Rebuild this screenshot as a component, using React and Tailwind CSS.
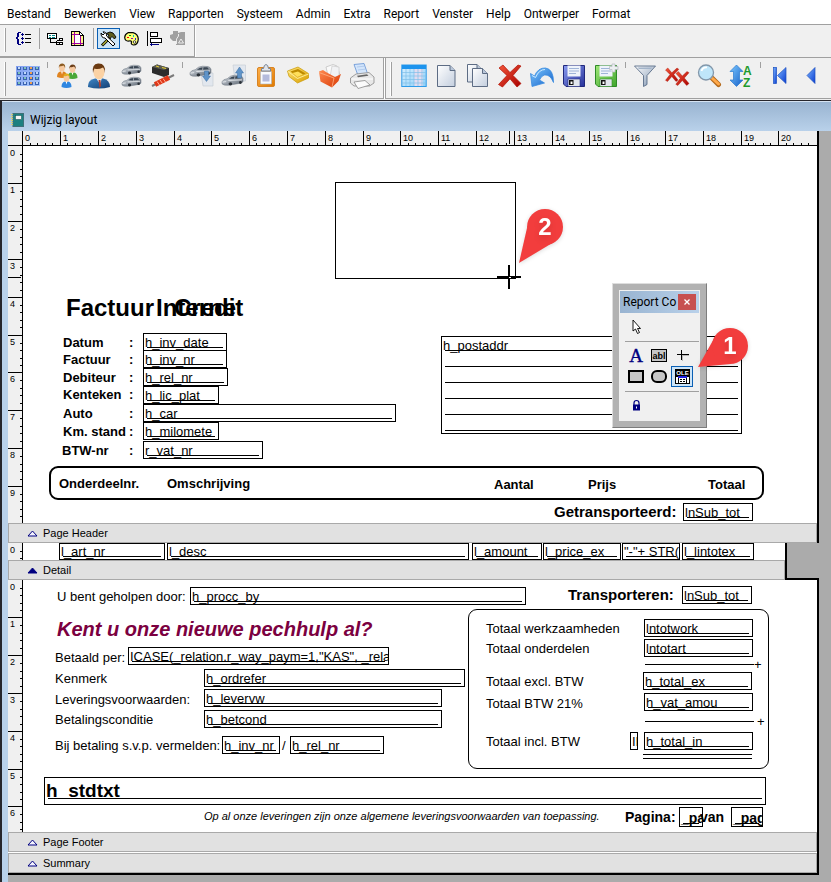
import React from "react";

const CM = 37.8;

/* ---------- small building blocks ---------- */

function Grip({ tall }) {
  return (
    <span
      className={
        "ml-1 mr-1.5 w-[2px] shrink-0 self-start border-l border-l-white bg-[#a0a0a0] " +
        (tall ? "mt-1 h-[34px]" : "h-6")
      }
    />
  );
}

function SmallButton({ label, active, children }) {
  return (
    <button
      type="button"
      aria-label={label}
      className={
        "flex h-[21px] w-[23px] shrink-0 items-center justify-center " +
        (active ? "border border-[#0a5fb4] bg-[#cce4f7]" : "")
      }
    >
      {children}
    </button>
  );
}

function SmallSeparator() {
  return (
    <span className="flex w-2 shrink-0 justify-center">
      <span className="h-[21px] w-px bg-[#a0a0a0]" />
    </span>
  );
}

function BigButton({ label, children }) {
  return (
    <button type="button" aria-label={label} className="flex h-9 w-8 shrink-0 items-center justify-center">
      <svg width="26" height="26" viewBox="0 0 26 26" aria-hidden="true">
        {children}
      </svg>
    </button>
  );
}

function BigSeparator() {
  return (
    <span className="flex w-[7px] shrink-0 justify-center self-start pt-1">
      <span className="h-1.5 w-px bg-[#a0a0a0]" />
    </span>
  );
}

/* ---------- icon parts ---------- */

function Gradients() {
  const list = [
    ["gPaper", "#ffffff", "#c3cede"],
    ["gRed", "#f4573a", "#a80000"],
    ["gBlue", "#7cc8ff", "#1560c8"],
    ["gNav", "#7ab4ff", "#0a3cd0"],
    ["gFun", "#ffffff", "#7d93b0"],
    ["gGold", "#ffe477", "#d99e00"],
    ["gFold", "#ff8a50", "#d83a06"],
    ["gFlop", "#8a9cf0", "#26309a"],
    ["gGreen", "#a0e878", "#3fa52c"],
    ["gCar", "#dde2e8", "#59636f"],
    ["gSuit", "#3f86c6", "#123f74"],
    ["gOrange", "#ffb04a", "#e07a00"],
    ["gTable", "#d9f0ff", "#8fd0f8"],
    ["gGrid", "#7f9df0", "#a9c8fa"],
  ];
  return (
    <svg width="0" height="0" className="absolute" aria-hidden="true">
      <defs>
        {list.map(([id, a, b]) => (
          <linearGradient key={id} id={id} x1="0" y1="0" x2="1" y2="1">
            <stop offset="0" stopColor={a} />
            <stop offset="1" stopColor={b} />
          </linearGradient>
        ))}
      </defs>
    </svg>
  );
}

function Person({ x, y, shirt, hair, s = 1 }) {
  return (
    <g transform={`translate(${x} ${y}) scale(${s})`}>
      <path d="M-5 11 Q-5 6 -1.500 5.500 L1.500 5.500 Q5 6 5 11 Q0 13 -5 11 Z" fill={shirt} />
      <path d="M-1 5 L1 5 L0 8.500 Z" fill="#fff" />
      <ellipse cx="0" cy="2" rx="2.900" ry="3.700" fill="#f6c9a0" />
      <path d="M-3.200 2 Q-3.500 -2.500 0.500 -2.500 Q3.800 -2 3.100 2.300 Q2.500 0 1.500 -0.400 Q-1 0.500 -2.300 0 Z" fill={hair} />
    </g>
  );
}

function Car({ x, y, s = 1 }) {
  return (
    <g transform={`translate(${x} ${y}) scale(${s})`}>
      <path d="M0 6.500 Q1 4 5 3.500 Q8 0.300 12 0.200 L17 0.500 Q19.500 1 20 3 L20 6.500 Q19 8 15 8.300 L6 9.800 Q1 10 0 8.300 Z" fill="url(#gCar)" stroke="#6b7580" strokeWidth=".5" />
      <path d="M6.500 3.500 Q9 1.200 12 1.100 L11.500 3.600 Z M12.800 1.100 L16.500 1.300 L18 3 L12.500 3.500 Z" fill="#3a4653" />
      <ellipse cx="8" cy="8.400" rx="1.700" ry="1.500" fill="#2a3037" />
      <ellipse cx="17.500" cy="7.100" rx="1.300" ry="1.400" fill="#2a3037" />
      <path d="M0.500 6.800 L4 6.300 M6 5.200 L19 4.600" stroke="#f7fafc" strokeWidth=".7" />
    </g>
  );
}

function Floppy({ body, edge }) {
  return (
    <>
      <path d="M2.500 2.500 H23.500 V23.500 H5 L2.500 21 Z" fill={body} stroke={edge} />
      <path d="M6.500 2.500 H19.500 V13.500 H6.500 Z" fill="#eef3fb" />
      <path d="M8 5.500 H18 M8 8 H18 M8 10.500 H15" stroke="#9fb4d8" />
      <path d="M7 16 H19 V23.500 H7 Z" fill="#e2e6ee" stroke={edge} strokeWidth=".6" />
      <path d="M8 17 H12.500 V22 H8 Z" fill="#111" />
      <path d="M9.500 18.500 L11.500 18.500 L11.500 21 H9.500 Z" fill="#fff" />
    </>
  );
}

function Sheet({ x, y, w, h }) {
  return (
    <g transform={`translate(${x} ${y})`}>
      <path d={`M.5 .5 H${w - 5} L${w} 5.500 V${h} H.5 Z`} fill="url(#gPaper)" stroke="#5d6c84" />
      <path d={`M${w - 5} .5 V5.500 H${w}`} fill="#b9c6d9" stroke="#5d6c84" />
    </g>
  );
}

/* ---------- rulers ---------- */

function HorizontalRuler() {
  const width = 795;
  const minor = Array.from({ length: 105 }, (_, i) => Math.round((i * CM) / 5));
  const major = Array.from({ length: 21 }, (_, i) => Math.round(i * CM + 0.4));
  return (
    <svg width={width} height="15" className="block" shapeRendering="crispEdges" aria-hidden="true">
      <rect width={width} height="15" fill="#f0f0f0" />
      {minor
        .filter((_, i) => i % 5 !== 0)
        .map((x) => (
          <rect key={"m" + x} x={x} y="12" width="1" height="3" fill="#000" />
        ))}
      {major.map((x, n) => (
        <g key={x}>
          <rect x={x} y="0" width="1" height="15" fill="#000" />
          <text x={x + 3} y="10" fontSize="9" fill="#000" fontFamily="Liberation Sans, sans-serif">
            {n}
          </text>
        </g>
      ))}
      <rect x="487" y="0" width="1" height="13" fill="#000" />
      <rect x="0" y="14" width={width} height="1" fill="#000" />
    </svg>
  );
}

function VerticalRuler({ height, marker }) {
  const minor = Array.from({ length: Math.ceil((height * 5) / CM) }, (_, i) => Math.round((i * CM) / 5));
  const major = Array.from({ length: Math.ceil(height / CM) }, (_, i) => Math.floor(i * CM));
  return (
    <svg width="15" height={height} className="block shrink-0" shapeRendering="crispEdges" aria-hidden="true">
      <rect width="15" height={height} fill="#f0f0f0" />
      {minor
        .filter((_, i) => i % 5 !== 0)
        .map((y) => (
          <rect key={"m" + y} x="12" y={y} width="3" height="1" fill="#000" />
        ))}
      {major.map((y, n) => (
        <g key={y}>
          {n > 0 && <rect x="0" y={y} width="15" height="1" fill="#000" />}
          <text x="2" y={y + 10} fontSize="9" fill="#000" fontFamily="Liberation Sans, sans-serif">
            {n}
          </text>
        </g>
      ))}
      {marker && <rect x="0" y={marker} width="13" height="1" fill="#000" />}
      <rect x="14" y="0" width="1" height={height} fill="#000" />
    </svg>
  );
}

/* ---------- objects on the report canvas ---------- */

const fieldSizes = {
  normal: "text-[13px] leading-4 pt-px",
  flat: "text-[13px] leading-4",
  page: "text-[14px] leading-5 font-bold",
  large: "text-[19px] leading-6 font-bold pt-px",
};

function Field({ x, y, w, h = 18, kind = "normal", line = true, children }) {
  return (
    <div
      className={"absolute overflow-hidden whitespace-nowrap border border-black pl-px " + fieldSizes[kind]}
      style={{ left: x, top: y, width: w, height: h }}
    >
      {children}
      {line && (
        <span
          className={
            "absolute left-[3px] right-[3px] h-px bg-black " + (kind === "large" ? "bottom-[5px]" : "bottom-[2px]")
          }
        />
      )}
    </div>
  );
}

const labelKinds = {
  normal: "text-[13px] leading-4",
  bold: "text-[13px] leading-4 font-bold",
  medium: "text-[15px] leading-5 font-bold",
  page: "text-[14px] leading-5 font-bold",
  title: "text-[24px] leading-7 font-bold",
  slogan: "text-[20px] leading-6 font-bold italic text-[#7b0040]",
  note: "text-[11px] leading-4 italic",
};

function Label({ x, y, kind = "normal", children }) {
  return (
    <span className={"absolute whitespace-nowrap " + labelKinds[kind]} style={{ left: x, top: y }}>
      {children}
    </span>
  );
}

function Line({ x, y, w }) {
  return <span className="absolute h-px bg-black" style={{ left: x, top: y, width: w }} />;
}

function Band({ title, filled }) {
  return (
    <div className="flex h-5 items-center gap-[5px] border border-[#a9a9a9] bg-[#e1e1e1] pl-[18px] text-[11px] leading-4">
      <svg width="11" height="7" viewBox="0 0 11 7" aria-hidden="true">
        <path d="M5.500 1 L10 6 H1 Z" fill={filled ? "#000080" : "#f4f4ff"} stroke="#000080" />
      </svg>
      <span>{title}</span>
    </div>
  );
}

function Pin({ number, className, tip }) {
  return (
    <div className={"absolute h-[64px] w-[60px] " + className}>
      <svg width="60" height="64" viewBox="0 0 60 64" className="block overflow-visible drop-shadow-sm" aria-hidden="true">
        <path d={tip} fill="#f23d3d" />
        <circle cx="37" cy="21" r="18" fill="#f23d3d" />
      </svg>
      <span className="absolute left-[27px] top-[7px] w-5 text-center text-[24px] leading-7 font-bold text-white drop-shadow-md">
        {number}
      </span>
    </div>
  );
}

/* ---------- data ---------- */

const menus = [
  "Bestand", "Bewerken", "View", "Rapporten", "Systeem", "Admin",
  "Extra", "Report", "Venster", "Help", "Ontwerper", "Format",
];

const headerRows = [
  { label: "Datum", lx: 40, ly: 189, field: "h_inv_date", y: 187, w: 84 },
  { label: "Factuur", lx: 40, ly: 206, field: "h_inv_nr", y: 204, w: 84 },
  { label: "Debiteur", lx: 40, ly: 224, field: "h_rel_nr", y: 222, w: 85 },
  { label: "Kenteken", lx: 40, ly: 241, field: "h_lic_plat", y: 240, w: 76 },
  { label: "Auto", lx: 40, ly: 260, field: "h_car", y: 258, w: 253 },
  { label: "Km. stand", lx: 40, ly: 278, field: "h_milomete", y: 276, w: 76 },
  { label: "BTW-nr", lx: 39, ly: 297, field: "r_vat_nr", y: 295, w: 120 },
];

const columns = [
  { x: 36, y: 330, text: "Onderdeelnr." },
  { x: 144, y: 330, text: "Omschrijving" },
  { x: 471, y: 331, text: "Aantal" },
  { x: 565, y: 331, text: "Prijs" },
  { x: 685, y: 331, text: "Totaal" },
];

const detailFields = [
  { x: 36, w: 106, text: "l_art_nr" },
  { x: 144, w: 302, text: "l_desc" },
  { x: 449, w: 70, text: "l_amount" },
  { x: 520, w: 78, text: "l_price_ex" },
  { x: 599, w: 58, text: '"-"+ STR(l_' },
  { x: 659, w: 72, text: "l_lintotex" },
];

const footerLabels = [
  { x: 34, y: 9, text: "U bent geholpen door:" },
  { x: 32, y: 70, text: "Betaald per:" },
  { x: 32, y: 91, text: "Kenmerk" },
  { x: 32, y: 112, text: "Leveringsvoorwaarden:" },
  { x: 32, y: 132, text: "Betalingsconditie" },
  { x: 32, y: 158, text: "Bij betaling s.v.p. vermelden:" },
  { x: 259, y: 158, text: "/" },
  { x: 463, y: 41, text: "Totaal werkzaamheden" },
  { x: 463, y: 61, text: "Totaal onderdelen" },
  { x: 463, y: 94, text: "Totaal excl. BTW" },
  { x: 463, y: 116, text: "Totaal BTW 21%" },
  { x: 463, y: 154, text: "Totaal incl. BTW" },
  { x: 731, y: 77, text: "+" },
  { x: 734, y: 134, text: "+" },
];

const footerFields = [
  { x: 167, y: 7, w: 336, text: "h_procc_by" },
  { x: 659, y: 6, w: 70, text: "lnSub_tot" },
  { x: 105, y: 67, w: 261, text: 'ICASE(_relation.r_way_paym=1,"KAS", _relation' },
  { x: 181, y: 89, w: 261, text: "h_ordrefer" },
  { x: 181, y: 109, w: 238, text: "h_levervw" },
  { x: 181, y: 130, w: 238, text: "h_betcond" },
  { x: 199, y: 156, w: 58, text: "h_inv_nr" },
  { x: 267, y: 156, w: 94, text: "h_rel_nr" },
  { x: 621, y: 39, w: 109, text: "lntotwork" },
  { x: 621, y: 59, w: 109, text: "lntotart" },
  { x: 620, y: 92, w: 109, text: "h_total_ex" },
  { x: 621, y: 113, w: 109, text: "h_vat_amou" },
  { x: 621, y: 152, w: 109, text: "h_total_in" },
];

/* ---------- chrome ---------- */

function MenuBar() {
  return (
    <nav className="flex h-6 items-center gap-[13px] bg-white pl-[7px] pt-1 font-[Roboto,sans-serif] text-[12px]">
      {menus.map((m) => (
        <button key={m} type="button" className="leading-5">
          {m}
        </button>
      ))}
    </nav>
  );
}

function DesignerToolbar() {
  return (
    <div className="flex h-[33px] border-t border-[#a0a0a0]">
      <div className="flex h-8 w-[195px] items-start border-b border-r border-[#a0a0a0] pt-[3px] pr-1">
        <Grip />
        <SmallButton label="Tab order">
          <svg width="15" height="13" viewBox="0 0 15 13" shapeRendering="crispEdges" aria-hidden="true">
            <path d="M2 0 H5 V1 H2 Z M1 1 H3 V5 H1 Z M0 5 H2 V7 H0 Z M1 7 H3 V12 H1 Z M2 12 H5 V13 H2 Z" fill="#000080" />
            <path d="M6 1 H7 V4 H6 Z M6 5 H7 V8 H6 Z M6 9 H7 V12 H6 Z M5 2 H8 V3 H5 Z M5 6 H8 V7 H5 Z M5 10 H8 V11 H5 Z" fill="#000080" />
            <path d="M9 2.500 H15 M9 6.500 H15 M9 10.500 H15" stroke="#000" />
          </svg>
        </SmallButton>
        <SmallSeparator />
        <SmallButton label="Data environment">
          <svg width="16" height="14" viewBox="0 0 16 14" shapeRendering="crispEdges" aria-hidden="true">
            <rect x=".5" y="1.500" width="9" height="5" fill="#fff" stroke="#000" />
            <path d="M2 3.500 H4 M5 3.500 H8 M2 5.500 H4 M5 5.500 H8" stroke="#008c8c" />
            <path d="M3.500 7 V10.500 H12 M9.500 8.500 H12 M9.500 8.500 V12.500 H12" fill="none" stroke="#000" />
            <rect x="12.500" y="6.500" width="3" height="2" fill="#fff" stroke="#000" />
            <rect x="12.500" y="10.500" width="3" height="2" fill="#fff" stroke="#000" />
          </svg>
        </SmallButton>
        <SmallButton label="Page setup">
          <svg width="13" height="15" viewBox="0 0 13 15" shapeRendering="crispEdges" aria-hidden="true">
            <path d="M0 0 H9 V1 H10 V2 H11 V3 H12 V4 H13 V15 H0 Z" fill="#000" />
            <path d="M1 1 H8 V5 H12 V14 H1 Z" fill="#fff88c" />
            <path d="M9 2 H10 V3 H11 V4 H9 Z" fill="#fff" />
            <rect x="4" y="4" width="5" height="8" fill="#fff" />
            <path d="M3 1 H4 V14 H3 Z M9 5 H10 V14 H9 Z M1 3 H8 V4 H1 Z M1 12 H12 V13 H1 Z" fill="#a000a0" />
          </svg>
        </SmallButton>
        <SmallSeparator />
        <SmallButton label="Report controls toolbar" active>
          <svg width="17" height="16" viewBox="0 0 17 16" aria-hidden="true">
            <path d="M2 14.500 L10 6.500" stroke="#000" strokeWidth="3" />
            <path d="M2.500 14 L9 7.500" stroke="#b9b93a" strokeWidth="1.200" />
            <path d="M6 2.500 L10 1 L13 2 L16 6 L14.500 8 L12 5.500 L10 7.500 L8 5.500 L9 4 Z" fill="#5d5d20" stroke="#000" strokeWidth=".9" />
            <path d="M1 2 L3 4 L4.500 2.500 L3 .8 Q7 1 6.500 5 L15 13 L13 15 L5 7 Q1 7 1 2 Z" fill="#fff" stroke="#000" />
          </svg>
        </SmallButton>
        <SmallButton label="Color palette">
          <svg width="15" height="14" viewBox="0 0 15 14" aria-hidden="true">
            <path d="M4 .7 H9 Q14 2 14.300 7 Q14 13 9.500 13 Q6.500 12.500 7.500 10 Q7.500 8.500 5 9 Q1 9.500 .7 5.500 Q.8 2 4 .7 Z" fill="#ffff7a" stroke="#000" strokeWidth="1.200" />
            <rect x="3" y="5" width="2" height="1" fill="#f00" />
            <rect x="5" y="3" width="2" height="1" fill="#00a000" />
            <rect x="9" y="3" width="1" height="2" fill="#00c8c8" />
            <rect x="11" y="6" width="1" height="2" fill="#2020e0" />
            <rect x="7" y="6" width="2" height="1" fill="#a000a0" />
            <circle cx="10.500" cy="10" r="1.300" fill="#fff" stroke="#000" strokeWidth=".7" />
          </svg>
        </SmallButton>
        <SmallButton label="Layout toolbar">
          <svg width="15" height="16" viewBox="0 0 15 16" shapeRendering="crispEdges" aria-hidden="true">
            <path d="M0 0 H1 V15 H0 Z" fill="#000" />
            <rect x="3.500" y="1.500" width="7" height="4" fill="#fff" stroke="#000" />
            <rect x="3.500" y="7.500" width="11" height="4" fill="#fff" stroke="#000" />
            <path d="M3 13 H12 V14 H3 Z M4 12 H5 V15 H4 Z" fill="#000080" />
          </svg>
        </SmallButton>
        <SmallButton label="Group">
          <svg width="16" height="15" viewBox="0 0 16 15" aria-hidden="true">
            <path d="M3 0 H8 V2 L11 1 H15 V14 H6 V10 H3 L0 7 L0 4 L3 3 Z" fill="#a0a0a0" />
            <path d="M8.500 3 V5 L6.500 8 V13 M11 8 L13.500 12 H8.500 L11 8" fill="none" stroke="#f4f4f4" strokeWidth=".9" />
          </svg>
        </SmallButton>
      </div>
      <span className="w-px bg-white" />
    </div>
  );
}

function MainToolbar() {
  return (
    <div className="flex h-[42px] overflow-hidden border-t border-[#a0a0a0]">
      <div className="flex h-[41px] w-[384px] shrink-0 items-start border-b border-r border-[#a0a0a0]">
        <Grip tall />
        <BigButton label="Overzicht">
          <rect x="1" y="3" width="24" height="20" fill="url(#gGrid)" />
          {[0, 1, 2, 3].map((r) =>
            [0, 1, 2, 3].map((c) => (
              <g key={r + "-" + c}>
                <rect x={2 + c * 6} y={4 + r * 5} width="4" height="3" fill="#3a62b0" />
                <rect x={3 + c * 6} y={4 + r * 5} width="2" height="2" fill={c === 2 ? "#f0a050" : (r + c) % 2 ? "#7fc0b8" : "#c0d8f8"} />
              </g>
            ))
          )}
        </BigButton>
        <BigSeparator />
        <BigButton label="Groepen">
          <Person x={8} y={3} shirt="#e08420" hair="#8b5a20" />
          <Person x={18.5} y={4} shirt="#4aa838" hair="#6b3d18" />
          <Person x={12.5} y={13} shirt="#2f86e0" hair="#e0b020" />
        </BigButton>
        <BigButton label="Relatie">
          <path d="M2 24 Q1.500 17 9 15.500 L17 15.500 Q24 17 24 24 Q13 27 2 24 Z" fill="url(#gSuit)" />
          <path d="M10 15 L16 15 L14 21 Z" fill="#e7f1fb" />
          <path d="M12.500 17 L14.500 17 L15 23 L13.500 25 Z" fill="#b04030" />
          <ellipse cx="13" cy="9" rx="5.500" ry="7.500" fill="#fbd2a4" />
          <path d="M7 10 Q5.500 1 12 .5 Q20 0 19 10 Q18.500 6 17 4.500 Q12 7 8.500 5.500 Q7.500 7 7 10 Z" fill="#6b3a12" />
        </BigButton>
        <BigButton label="Voertuigen">
          <Car x={4} y={2} s={0.95} />
          <Car x={4} y={14} s={0.95} />
        </BigButton>
        <BigButton label="Onderdelen">
          <path d="M2 4 L7 1.500 L19 5 L19 12 L14 14 L2 10 Z" fill="#2c2c2c" />
          <path d="M2 4 L7 1.500 L19 5 L14 7 Z" fill="#5d5d50" />
          <path d="M6 3 L9 4 M12 4.500 L16 5.500" stroke="#e8d030" strokeWidth="1" />
          <path d="M2 23 L24 12" stroke="#7a7a7a" strokeWidth="2" />
          <path d="M5 21.500 L19 14.500" stroke="#e03818" strokeWidth="5" />
          <path d="M7 18.500 L9.500 22 M10 17 L12.500 20.500 M13 15.500 L15.500 19" stroke="#ffb09a" strokeWidth="1" />
        </BigButton>
        <BigSeparator />
        <BigButton label="Voertuig uit">
          <path d="M12 10 H24 V23 H14 Z" fill="#e2e7ee" stroke="#c3c9d2" strokeWidth=".6" />
          <Car x={1} y={3} s={1.05} />
          <path d="M17.500 18.500 L13.500 13 H15.500 V8 H19.500 V13 H21.500 Z" fill="#5f93c8" stroke="#3a6ca0" strokeWidth=".5" />
        </BigButton>
        <BigButton label="Voertuig in">
          <path d="M12 2 H24.500 V18 H14 Z" fill="#e2e7ee" stroke="#c3c9d2" strokeWidth=".6" />
          <Car x={1} y={12} s={1.05} />
          <path d="M18.500 4 L14.500 10 H16.500 V15 H20.500 V10 H22.500 Z" fill="#5f93c8" stroke="#3a6ca0" strokeWidth=".5" />
        </BigButton>
        <BigButton label="Klembord">
          <rect x="4.500" y="4.500" width="17" height="19" rx="1.500" fill="url(#gOrange)" stroke="#d88424" />
          <path d="M7.500 8.500 H18.500 V21 H7.500 Z" fill="#f8fafd" stroke="#a9b2c0" strokeWidth=".6" />
          <path d="M9.500 11.500 H16.500 V18.500 H9.500 Z" fill="#b4bbdc" />
          <path d="M8.500 8 V5.500 H10.500 Q11 1.500 13 1.500 Q15 1.500 15.500 5.500 H17.500 V8 Z" fill="#e0e4ea" stroke="#7a8494" />
        </BigButton>
        <BigButton label="Postbak">
          <path d="M2.500 8 L13 4 L23.500 10.500 V15 L12.500 20 L4 13.500 Z" fill="url(#gGold)" stroke="#c99800" strokeWidth=".7" />
          <path d="M5.500 8.500 L13 6 L20.500 10.500 L12.500 14 Z" fill="#bd8a00" />
          <path d="M7.500 10 L13 8.500 L18 11.500 L12.500 14 Z" fill="#ffdf5a" />
          <path d="M3 8.500 L12.500 15.500 L23.500 11" fill="none" stroke="#fff2a0" strokeWidth=".9" />
        </BigButton>
        <BigButton label="Map">
          <path d="M9 4 L16 1.500 L20 3 L23 12 L12 17 Z" fill="#fafafa" stroke="#bcbcbc" strokeWidth=".7" />
          <path d="M15 3 L22 4 L22 14 L13 14 Z" fill="#f1f2f4" stroke="#c4c4c4" strokeWidth=".6" />
          <path d="M2 8.500 L6 7 L9 9 L18 14 L24 11 L21.500 18 L15 24.500 L3.500 18.500 Z" fill="url(#gFold)" />
          <path d="M2 9.500 L17 15 L15 24" fill="none" stroke="#ffb184" strokeWidth=".8" />
        </BigButton>
        <BigButton label="Afdrukken">
          <path d="M5 1.500 L15 .5 L18.500 10.500 L9 12.500 Z" fill="#d3e5fb" stroke="#6f9bd8" strokeWidth=".9" />
          <path d="M8 4 L15 3.200 M9 7 L16 6.200" stroke="#a8c4e8" strokeWidth=".8" />
          <path d="M1.500 15 L7 11 L20 9.500 L25 14 V20 L20.500 23 H5 L1.500 20 Z" fill="#e8e8e8" stroke="#8a8a8a" strokeWidth=".8" />
          <path d="M8 12.800 L18 11.300 L19.500 12.800 L9 14.300 Z" fill="#666" />
          <path d="M2.500 16 H24" stroke="#fff" />
          <path d="M5 19 L16 17.500 L21 22 L9 25.500 Z" fill="#fbfbfb" stroke="#8a8a8a" strokeWidth=".8" />
        </BigButton>
      </div>
      <span className="w-px shrink-0 bg-white" />
      <div className="flex h-[41px] min-w-0 flex-1 items-start overflow-hidden border-b border-l border-[#a0a0a0]">
        <Grip tall />
        <BigButton label="Tabel">
          <rect x=".8" y="2" width="24.400" height="21.500" fill="url(#gTable)" stroke="#2f9be8" />
          <rect x="1" y="2" width="24" height="4" fill="#1d94ee" />
          <rect x="13" y="6" width="9" height="17" fill="#e2dcf0" />
          <path d="M1 9.500 H25 M1 13 H25 M1 16.500 H25 M1 20 H25 M5 6 V23 M9 6 V23 M13 6 V23 M17 6 V23 M21 6 V23" stroke="#7fbfe8" strokeWidth=".7" />
        </BigButton>
        <BigButton label="Nieuw">
          <Sheet x={4} y={2} w={18} h={21.5} />
        </BigButton>
        <BigButton label="Kopiëren">
          <Sheet x={2} y={1} w={15} h={18} />
          <Sheet x={7} y={5} w={15.5} h={18.5} />
        </BigButton>
        <BigButton label="Verwijderen">
          <path d="M2 5 L6 2 L13 9.500 L21 2 L24 3 L16 12.500 L24 20.500 L20 24 L13 15.800 L5.500 24 L1.500 21.500 L10 12.500 Z" fill="url(#gRed)" stroke="#b01000" strokeWidth=".7" />
        </BigButton>
        <BigButton label="Ongedaan maken">
          <path d="M1.500 10.500 L5.500 13 Q9 4.500 16.500 5 Q24.500 6 24.500 19.500 Q21 11 15.500 12 Q12.500 12.500 10.500 17 L15.500 20 L3 23.500 Z" fill="url(#gBlue)" stroke="#3a8be0" strokeWidth=".8" />
          <path d="M3 12.500 L6.500 14.500 Q10 6.500 16 6.500" fill="none" stroke="#cdeaff" />
        </BigButton>
        <BigButton label="Opslaan">
          <Floppy body="url(#gFlop)" edge="#20287c" />
        </BigButton>
        <BigButton label="Opslaan en nieuw">
          <Floppy body="url(#gGreen)" edge="#2f8a28" />
          <path d="M19 1 H22 V3.500 H25 V6.500 H22 V9 H19 V6.500 H16.500 V3.500 H19 Z" fill="#eceff1" stroke="#b4b9be" strokeWidth=".7" />
        </BigButton>
        <BigSeparator />
        <BigButton label="Filter">
          <path d="M2.500 3 H23.500 L15 12.500 V21.500 L11.500 23.500 V12.500 Z" fill="url(#gFun)" stroke="#5a6d88" strokeWidth=".9" />
          <path d="M5.500 4.500 H20.500 L19 6 H7 Z" fill="#a3b4c9" />
        </BigButton>
        <BigButton label="Filter verwijderen">
          <g fill="url(#gRed)" stroke="#a81000" strokeWidth=".4">
            <path d="M1.500 7 L3.800 5 L7.800 9.800 L13 5 L14.800 6.300 L9.800 11.500 L14 17 L12 18.500 L7.800 13.500 L3.500 18.500 L1.500 17.300 L6 11.500 Z" />
            <path d="M12 10.500 L14.300 8.500 L18.300 13 L23 8.500 L25 9.700 L20.300 15 L25 20.500 L22.700 22.500 L18.300 17.500 L13.800 22.500 L11.800 21.300 L16.300 15.300 Z" />
          </g>
        </BigButton>
        <BigButton label="Zoeken">
          <path d="M16.500 15.500 L22.500 21.500" stroke="#b56a1c" strokeWidth="5" strokeLinecap="round" />
          <path d="M16.500 15.500 L22.500 21" stroke="#ffa94a" strokeWidth="3" strokeLinecap="round" />
          <circle cx="10" cy="9.500" r="7.500" fill="#bfe6fa" stroke="#8397aa" strokeWidth="1.300" />
          <path d="M5.500 8 Q6.500 4 11 4.300" fill="none" stroke="#fff" strokeWidth="1.800" />
        </BigButton>
        <BigButton label="Sorteren">
          <path d="M8.500 2 L15 8.500 H11.500 V17 H15 L8.500 23.500 L2 17 H5.500 V8.500 H2 Z" fill="url(#gBlue)" stroke="#2a7ad0" strokeWidth=".7" />
          <text x="15" y="12" fontSize="12" fontWeight="bold" fill="#1f9a2c" fontFamily="Liberation Sans, sans-serif">A</text>
          <text x="15" y="24" fontSize="12" fontWeight="bold" fill="#1f9a2c" fontFamily="Liberation Sans, sans-serif">Z</text>
        </BigButton>
        <BigSeparator />
        <BigButton label="Eerste">
          <rect x="6.500" y="4.500" width="3" height="16" fill="url(#gNav)" stroke="#1a4fc0" strokeWidth=".7" />
          <path d="M19 4.500 V20.500 L10.500 12.500 Z" fill="url(#gNav)" stroke="#1a4fc0" strokeWidth=".7" />
        </BigButton>
        <BigButton label="Vorige">
          <path d="M16 4.500 V20.500 L8 12.500 Z" fill="url(#gNav)" stroke="#1a4fc0" strokeWidth=".7" />
        </BigButton>
      </div>
    </div>
  );
}

/* ---------- floating palette ---------- */

function PaletteButton({ label, active, children }) {
  return (
    <button
      type="button"
      aria-label={label}
      className={
        "flex h-[21px] w-[22px] items-center justify-center " + (active ? "border border-[#0a5fb4] bg-[#cce4f7]" : "")
      }
    >
      <svg width="17" height="17" viewBox="0 0 17 17" className="shrink-0" aria-hidden="true">
        {children}
      </svg>
    </button>
  );
}

function Palette() {
  return (
    <section
      aria-label="Report Controls"
      className="absolute left-[589px] top-[137px] w-[95px] border border-b-[#7d7d7d] border-l-[#dedede] border-r-[#7d7d7d] border-t-[#dedede] bg-[#b2b2b2] p-1.5"
    >
      <div className="bg-[#f0f0f0] p-px pb-1">
        <header className="flex h-[22px] items-center justify-between bg-gradient-to-r from-[#99b4d1] to-[#b9d1ea] px-[3px]">
          <span className="font-[Roboto,sans-serif] text-[12px] whitespace-nowrap">Report Co</span>
          <button
            type="button"
            aria-label="Sluiten"
            className="flex h-4 w-[18px] shrink-0 items-center justify-center bg-[#c75050]"
          >
            <svg width="6" height="6" viewBox="0 0 6 6" aria-hidden="true">
              <path d="M.5 .5 L5.500 5.500 M5.500 .5 L.5 5.500" stroke="#fff" strokeWidth="1.300" />
            </svg>
          </button>
        </header>
        <div className="flex flex-col pl-[5px]">
          <div className="pb-1 pt-[3px]">
            <PaletteButton label="Select">
              <path d="M5 2 V13 L7.500 11 L9.500 15.500 L11.500 14.500 L9.500 10.500 H12.500 Z" fill="#fff" stroke="#000" strokeWidth=".9" />
            </PaletteButton>
          </div>
          <div className="grid grid-cols-[23px_23px_22px] border-t border-[#a0a0a0] pb-1 pt-[3px]">
            <PaletteButton label="Label">
              <text x="8" y="15" textAnchor="middle" fontSize="19" fill="#000080" stroke="#000080" strokeWidth=".4" fontFamily="Liberation Serif, serif">A</text>
            </PaletteButton>
            <PaletteButton label="Field">
              <rect x=".5" y="2.500" width="15" height="12" fill="#c6c6c6" stroke="#000" />
              <text x="8" y="12" textAnchor="middle" fontSize="9" fontWeight="bold" fontFamily="Liberation Sans, sans-serif">abl</text>
            </PaletteButton>
            <PaletteButton label="Line">
              <path d="M3 7 H15 V8 H3 Z M7 3 H8 V13 H7 Z" fill="#000" shapeRendering="crispEdges" />
              <path d="M9 8 H15 V9 H9 Z M8 8 H9 V14 H8 Z" fill="#b8b8b8" shapeRendering="crispEdges" />
            </PaletteButton>
            <PaletteButton label="Rectangle">
              <rect x="1" y="3" width="14" height="11" fill="#c6c6c6" stroke="#000" strokeWidth="2" />
            </PaletteButton>
            <PaletteButton label="Rounded rectangle">
              <rect x="1" y="3" width="14" height="11" rx="5" fill="#c6c6c6" stroke="#000" strokeWidth="2" />
            </PaletteButton>
            <PaletteButton label="Picture/OLE bound control" active>
              <rect x="1" y="1" width="15" height="8" fill="#000" />
              <text x="8.500" y="7" textAnchor="middle" fontSize="6" fontWeight="bold" fill="#fff" fontFamily="Liberation Sans, sans-serif">OLE</text>
              <rect x="1.500" y="8.500" width="14" height="7" fill="#fff" stroke="#000" />
              <rect x="4" y="8" width="9" height="2" fill="#2020e0" />
              <path d="M4 10 H5 V15 H4 Z M12 10 H13 V15 H12 Z M6 11 H8 V12 H6 Z M9 11 H11 V12 H9 Z M6 13 H8 V14 H6 Z M9 13 H11 V14 H9 Z" fill="#000" />
            </PaletteButton>
          </div>
          <div className="border-t border-[#a0a0a0] pb-px pt-[3px]">
            <PaletteButton label="Button lock">
              <path d="M6 8 V6 Q6 3.500 8.500 3.500 Q11 3.500 11 6 V8" fill="none" stroke="#000080" strokeWidth="1.200" />
              <rect x="5" y="7.500" width="7" height="6" fill="#000080" />
              <rect x="8" y="9.500" width="1" height="2" fill="#fff" />
            </PaletteButton>
          </div>
        </div>
      </div>
    </section>
  );
}

/* ---------- report sections ---------- */

function PageHeader() {
  return (
    <div className="flex">
      <VerticalRuler height={377} marker={131} />
      <div className="relative flex-1 bg-white">
        <div className="absolute left-[312px] top-[36px] h-[97px] w-[181px] border border-black" />
        <svg width="25" height="25" viewBox="0 0 25 25" className="absolute left-[474px] top-[119px]" shapeRendering="crispEdges" aria-hidden="true">
          <path d="M12 0 V24 M0 12 H24" stroke="#000" strokeWidth="2" />
          <rect x="12" y="12" width="2" height="1" fill="#fff" />
        </svg>
        <Pin number="2" className="left-[485px] top-[60px]" tip="M11 57 L19 22 L46 36 Z" />

        <Label x={43} y={148} kind="title">Factuur</Label>
        <Label x={133} y={148} kind="title">Interne</Label>
        <Label x={151} y={148} kind="title">Credit</Label>

        {headerRows.map((r) => (
          <React.Fragment key={r.label}>
            <Label x={r.lx} y={r.ly} kind="bold">{r.label}</Label>
            <Label x={106} y={r.ly} kind="bold">:</Label>
            <Field x={120} y={r.y} w={r.w}>{r.field}</Field>
          </React.Fragment>
        ))}

        <Field x={418} y={190} w={301} h={98} line={false}>h_postaddr</Field>
        {[204, 220, 236, 252, 268, 284].map((y) => (
          <Line key={y} x={422} y={y} w={293} />
        ))}

        <div className="absolute left-[26px] top-[320px] h-[34px] w-[715px] rounded-[9px] border-2 border-black" />
        {columns.map((c) => (
          <Label key={c.text} x={c.x} y={c.y} kind="bold">{c.text}</Label>
        ))}
        <Label x={531} y={356} kind="medium">Getransporteerd:</Label>
        <Field x={660} y={357} w={70}>lnSub_tot</Field>

        <Palette />
        <Pin number="1" className="left-[670px] top-[179px]" tip="M5 42 L23 10 L38 39 Z" />
      </div>
    </div>
  );
}

function Detail() {
  return (
    <div className="flex">
      <div className="w-[777px]">
        <div className="flex">
          <VerticalRuler height={17} />
          <div className="relative flex-1 bg-white">
            {detailFields.map((f) => (
              <Field key={f.text} x={f.x} y={0} w={f.w} h={17} kind="flat">{f.text}</Field>
            ))}
          </div>
        </div>
        <Band title="Detail" filled />
      </div>
      <div className="flex-1 border-b-2 border-l-2 border-black bg-[#ababab]" />
    </div>
  );
}

function PageFooter() {
  return (
    <div className="flex">
      <VerticalRuler height={252} />
      <div className="relative flex-1 bg-white">
        <div className="absolute left-[445px] top-[29px] h-[160px] w-[301px] rounded-[9px] border border-black" />
        {footerLabels.map((l) => (
          <Label key={l.text + l.y} x={l.x} y={l.y}>{l.text}</Label>
        ))}
        {footerFields.map((f) => (
          <Field key={f.text} x={f.x} y={f.y} w={f.w}>{f.text}</Field>
        ))}
        <Field x={607} y={152} w={8} line={false}>II</Field>
        <Label x={545} y={5} kind="medium">Transporteren:</Label>
        <Label x={34} y={37} kind="slogan">Kent u onze nieuwe pechhulp al?</Label>
        <Line x={622} y={84} w={109} />
        <Line x={622} y={141} w={109} />
        <Line x={620} y={174} w={109} />
        <Line x={620} y={178} w={109} />
        <Field x={21} y={197} w={722} h={28} kind="large">h_stdtxt</Field>
        <Label x={181} y={228} kind="note">
          Op al onze leveringen zijn onze algemene leveringsvoorwaarden van toepassing.
        </Label>
        <Label x={602} y={227} kind="page">Pagina:</Label>
        <Field x={656} y={227} w={24} h={20} kind="page">_pageno</Field>
        <Label x={677} y={227} kind="page">van</Label>
        <Field x={708} y={227} w={32} h={20} kind="page">_pagetotal</Field>
      </div>
    </div>
  );
}

export default function App() {
  return (
    <div className="flex min-h-screen flex-col overflow-hidden bg-[#f0f0f0] font-['Liberation_Sans',Arial,sans-serif] text-black">
      <Gradients />
      <MenuBar />
      <DesignerToolbar />
      <MainToolbar />
      <main className="mt-px flex flex-1 flex-col border-l-2 border-t border-[#26262c] bg-[#b9d1ea]">
        <header className="flex h-[30px] items-center gap-1.5 border-t border-[#d5e3f2] bg-gradient-to-b from-[#99b4d1] to-[#b9d1ea] pl-[9px] pt-1.5">
          <svg width="13" height="14" viewBox="0 0 13 14" aria-hidden="true">
            <rect x="2" y=".5" width="10.500" height="13" fill="#1c8080" stroke="#3f6f78" />
            <rect x="4.500" y="2.500" width="6" height="4" fill="#f4f4f4" stroke="#0c4a4a" strokeWidth=".5" />
            <path d="M1 1 V13" stroke="#e6d850" strokeWidth="1.500" strokeDasharray="1 1" />
          </svg>
          <h1 className="font-[Roboto,sans-serif] text-[12px]">Wijzig layout</h1>
        </header>
        <div className="ml-1.5 flex-1 bg-[#ababab]">
          <div className="w-[811px] border-b-2 border-black">
            <div className="border-r-2 border-black">
              <div className="flex">
                <div className="w-3.5 border-b border-black bg-[#f0f0f0]" />
                <HorizontalRuler />
              </div>
              <PageHeader />
              <Band title="Page Header" />
            </div>
            <Detail />
            <div className="border-r-2 border-black bg-white">
              <PageFooter />
              <Band title="Page Footer" />
              <div className="pt-px">
                <Band title="Summary" />
              </div>
            </div>
          </div>
        </div>
      </main>
    </div>
  );
}
